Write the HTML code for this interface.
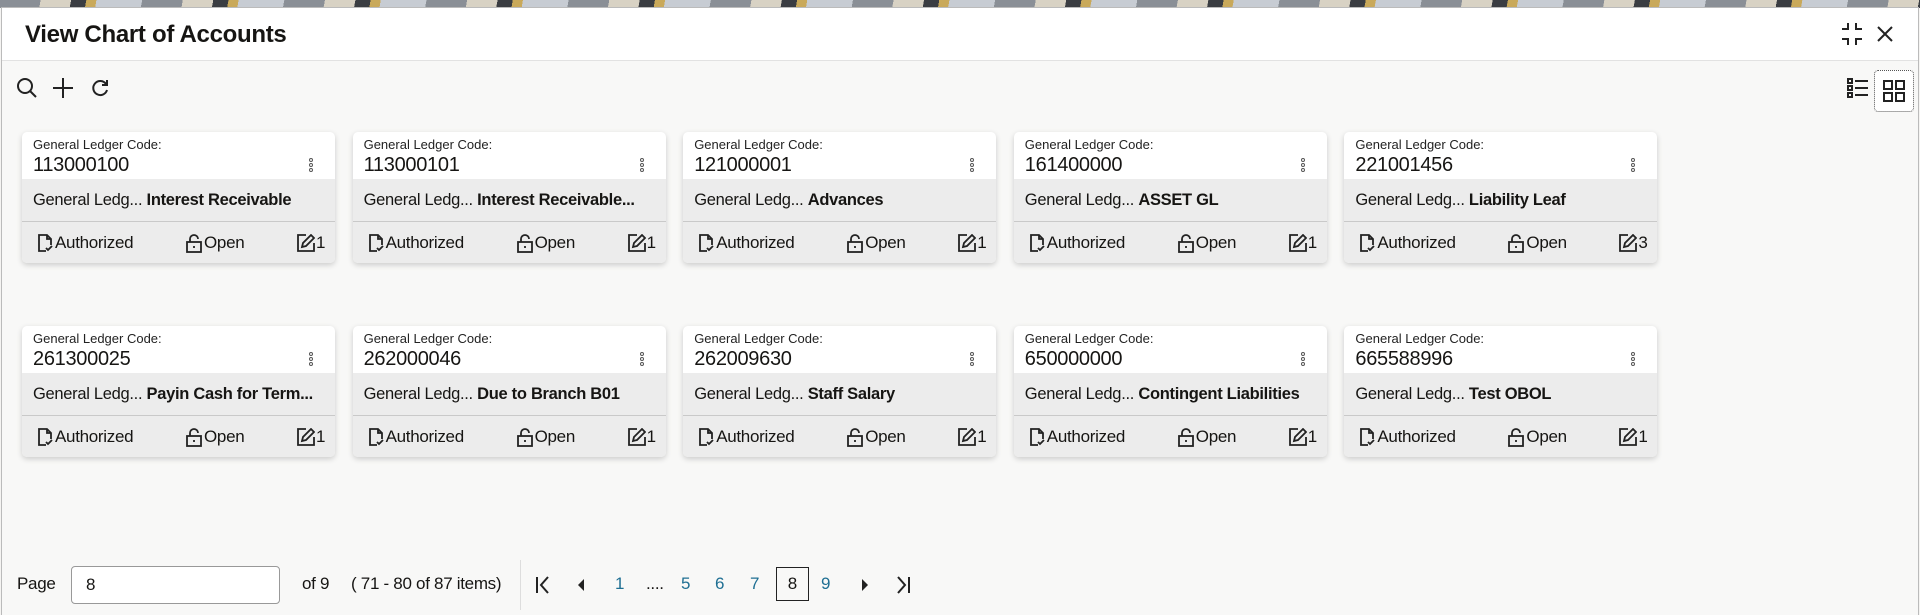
<!DOCTYPE html>
<html><head><meta charset="utf-8"><style>
*{box-sizing:border-box;margin:0;padding:0}
body{width:1920px;height:615px;overflow:hidden;font-family:"Liberation Sans",sans-serif;color:#161513;background:#f5f4f2;position:relative}
.band{position:absolute;left:0;top:0;width:1920px;height:8px;background:repeating-linear-gradient(100deg,#8a8f96 0 40px,#d8d2c4 40px 70px,#3a3d42 70px 85px,#c9a95a 85px 95px,#c7ccd3 95px 140px)}
.dlg{position:absolute;left:1px;top:7px;width:1918px;height:608px;background:#f8f8f7;border:1px solid #bbb;border-bottom:none}
.hdr{position:absolute;left:0;top:0;width:100%;height:53px;background:#fff;border-bottom:1px solid #e2e2e2}
.title{position:absolute;left:23px;top:13px;font-size:24px;font-weight:bold;letter-spacing:-0.3px}
.card{position:absolute;width:313px;height:131px;background:#fff;border-radius:5px;box-shadow:0 2px 6px rgba(0,0,0,.18);overflow:hidden}
.lbl{position:absolute;left:11px;top:5px;font-size:13px;color:#222}
.num{position:absolute;left:11px;top:22px;font-size:20px;letter-spacing:-0.3px}
.keb{position:absolute;left:287px;top:26px;width:4px}
.keb i{display:block;width:4px;height:4px;border:1px solid #555;border-radius:50%;margin-bottom:1px}
.mid{position:absolute;left:0;top:47px;width:100%;height:43px;background:#ececec;border-bottom:1px solid #c9c9c9;font-size:16.5px;line-height:43px;padding-left:11px;white-space:nowrap;letter-spacing:-0.3px}
.mid b{margin-left:0px}
.ft{position:absolute;left:0;top:90px;width:100%;height:41px;background:#ececec;font-size:17px;line-height:41px;letter-spacing:-0.3px}
.ft span{position:absolute;top:0}
.ft svg{position:absolute;top:12px}
.pg{position:absolute;font-size:17px;top:566px;line-height:36px;letter-spacing:-0.3px}
.bl{color:#1f6f93}
</style></head><body>
<div class="band"></div>
<div class="dlg">
<div class="hdr"><div class="title">View Chart of Accounts</div>
<svg style="position:absolute;left:1838px;top:14px" width="24" height="24" viewBox="0 0 24 24" fill="none" stroke="#222" stroke-width="2"><path d="M8 1v6H2M16 1v6h6M8 23v-6H2M16 23v-6h6"/></svg>
<svg style="position:absolute;left:1874px;top:17px" width="18" height="18" viewBox="0 0 18 18" stroke="#222" stroke-width="2"><path d="M2 2l14 14M16 2L2 16"/></svg>
</div>
<svg style="position:absolute;left:14px;top:69px" width="22" height="22" viewBox="0 0 22 22" fill="none" stroke="#222" stroke-width="2"><circle cx="9" cy="9" r="7"/><path d="M14 14l6 6"/></svg>
<svg style="position:absolute;left:50px;top:69px" width="22" height="22" viewBox="0 0 22 22" stroke="#222" stroke-width="2"><path d="M11 1v20M1 11h20"/></svg>
<svg style="position:absolute;left:87px;top:69px" width="22" height="22" viewBox="0 0 22 22" fill="none" stroke="#222" stroke-width="2"><path d="M17 7A7 7 0 1 0 18 13"/><path d="M18 3v5h-5"/></svg>
<svg style="position:absolute;left:1845px;top:69px" width="22" height="22" viewBox="0 0 22 22" fill="none" stroke="#222" stroke-width="2"><rect x="1" y="2" width="4" height="4"/><rect x="1" y="9" width="4" height="4"/><rect x="1" y="16" width="4" height="4"/><path d="M8 4h13M8 11h13M8 18h13"/></svg>
<div style="position:absolute;left:1872px;top:62px;width:40px;height:42px;border:1px dotted #555;border-radius:4px;background:#fff"></div>
<svg style="position:absolute;left:1881px;top:72px" width="22" height="22" viewBox="0 0 22 22" fill="none" stroke="#222" stroke-width="2"><rect x="1" y="1" width="8" height="8"/><rect x="13" y="1" width="8" height="8"/><rect x="1" y="13" width="8" height="8"/><rect x="13" y="13" width="8" height="8"/></svg>
</div>

<div id="cards"></div>

<div class="pg" style="left:17px">Page</div>
<div style="position:absolute;left:71px;top:566px;width:209px;height:38px;background:#fff;border:1px solid #999;border-radius:4px;font-size:17px;line-height:36px;padding-left:14px">8</div>
<div class="pg" style="left:302px">of 9</div>
<div class="pg" style="left:351px">( 71 - 80 of 87 items)</div>
<div style="position:absolute;left:520px;top:560px;width:1px;height:50px;background:#ddd"></div>
<svg style="position:absolute;left:535px;top:576px" width="16" height="18" viewBox="0 0 16 18" fill="none" stroke="#222" stroke-width="2"><path d="M2 1v16M13 1L6 9l7 8"/></svg>
<svg style="position:absolute;left:576px;top:578px" width="10" height="14" viewBox="0 0 10 14"><path d="M8 1L2 7l6 6z" fill="#222"/></svg>
<div class="pg bl" style="left:615px">1</div>
<div class="pg" style="left:646px">....</div>
<div class="pg bl" style="left:681px">5</div>
<div class="pg bl" style="left:715px">6</div>
<div class="pg bl" style="left:750px">7</div>
<div style="position:absolute;left:776px;top:567px;width:33px;height:34px;border:1px solid #222;font-size:17px;line-height:32px;text-align:center">8</div>
<div class="pg bl" style="left:821px">9</div>
<svg style="position:absolute;left:860px;top:578px" width="10" height="14" viewBox="0 0 10 14"><path d="M2 1l6 6-6 6z" fill="#222"/></svg>
<svg style="position:absolute;left:895px;top:576px" width="16" height="18" viewBox="0 0 16 18" fill="none" stroke="#222" stroke-width="2"><path d="M14 1v16M3 1l7 8-7 8"/></svg>

<script>
var d=[["113000100","Interest Receivable",1],["113000101","Interest Receivable...",1],["121000001","Advances",1],["161400000","ASSET GL",1],["221001456","Liability Leaf",3],
["261300025","Payin Cash for Term...",1],["262000046","Due to Branch B01",1],["262009630","Staff Salary",1],["650000000","Contingent Liabilities",1],["665588996","Test OBOL",1]];
var h="";
var doc='<svg style="left:15px" width="16" height="18" viewBox="0 0 16 18" fill="none" stroke="#222" stroke-width="1.8"><path d="M9 17H2V1h8l4 4v6M10 1v4h4M9 14l2 2 4-4"/></svg>';
var lock='<svg style="left:164px" width="16" height="19" viewBox="0 0 16 19" fill="none" stroke="#222" stroke-width="1.8"><rect x="1" y="8" width="14" height="10"/><path d="M4 8V5a4 4 0 0 1 8 0"/><path d="M8 12v2"/></svg>';
var ed='<svg style="left:275px" width="18" height="18" viewBox="0 0 18 18" fill="none" stroke="#222" stroke-width="1.8"><path d="M9 1H1v16h16V9"/><path d="M5 13l1-4 8-8 3 3-8 8z"/></svg>';
d.forEach(function(c,i){var x=22+(i%5)*330.6,y=i<5?132:326;
h+='<div class="card" style="left:'+x+'px;top:'+y+'px"><div class="lbl">General Ledger Code:</div><div class="num">'+c[0]+'</div><div class="keb"><i></i><i></i><i></i></div><div class="mid">General Ledg... <b>'+c[1]+'</b></div><div class="ft">'+doc+'<span style="left:33px">Authorized</span>'+lock+'<span style="left:182px">Open</span>'+ed+'<span style="left:294px">'+c[2]+'</span></div></div>';});
document.getElementById("cards").innerHTML=h;
</script>
</body></html>
